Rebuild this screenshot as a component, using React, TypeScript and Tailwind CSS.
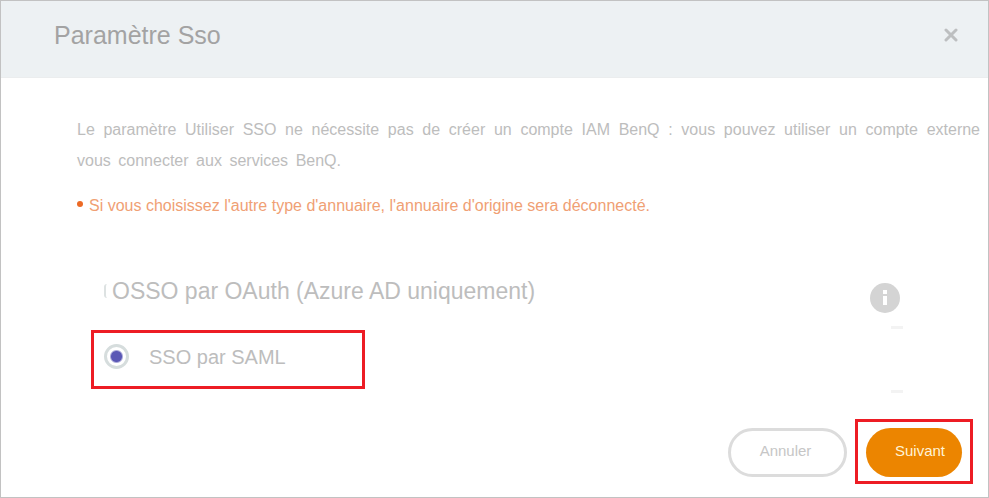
import { useState } from "react";

function CloseIcon() {
  return (
    <svg width="16" height="16" viewBox="0 0 16 16" fill="none" stroke="#bdbfc0" strokeWidth="3" strokeLinecap="round" aria-hidden="true">
      <path d="M3 2l10 10M13 2L3 12" />
    </svg>
  );
}

function InfoIcon() {
  return (
    <svg width="30" height="30" viewBox="0 0 30 30" aria-hidden="true">
      <circle cx="15" cy="15" r="15" fill="#d4d4d4" />
      <rect x="13" y="7" width="4" height="4" fill="#fff" />
      <rect x="13" y="13" width="4" height="9" fill="#fff" />
    </svg>
  );
}

export default function App() {
  const [mode, setMode] = useState("saml");
  return (
    <main
      className="flex min-h-screen flex-col border border-[#c2c2c2] bg-white text-[#bdbdbd]"
      style={{ fontFamily: '"Liberation Sans", Arial, sans-serif' }}
    >
      <header className="flex h-[77px] items-center justify-between border-b border-[#ebedee] bg-[#edf1f3] pr-[29px] pb-[7px] pl-[53px]">
        <h1 className="text-[25px] text-[#a3a3a3]">Paramètre Sso</h1>
        <button type="button" aria-label="Fermer">
          <CloseIcon />
        </button>
      </header>

      <section className="pt-[36px] pr-[8px] pl-[76px] text-base leading-[31px]">
        <p className="text-justify [text-align-last:justify]">
          Le paramètre Utiliser SSO ne nécessite pas de créer un compte IAM BenQ : vous pouvez utiliser un compte externe
        </p>
        <p className="w-[264px] whitespace-nowrap [text-align-last:justify]">vous connecter aux services BenQ.</p>
        <p className="mt-[14px] flex items-center gap-[6px] text-[#f0a074]">
          <span className="-mt-1 size-[6px] rounded-full bg-[#ec6a25]" />
          Si vous choisissez l'autre type d'annuaire, l'annuaire d'origine sera déconnecté.
        </p>
      </section>

      <fieldset className="mt-[54px] flex justify-between pr-[85px] pl-[90px]">
        <div>
          <label className="ml-[13px] flex h-[32px] items-center gap-[5px] text-[23px]">
            <input
              type="radio"
              name="mode"
              checked={mode === "oauth"}
              onChange={() => setMode("oauth")}
              className="h-[14px] w-[3px] appearance-none rounded-l-full border-l-2 border-[#dde2e2]"
            />
            OSSO par OAuth (Azure AD uniquement)
          </label>
          <div className="mt-[23px] flex h-[59px] w-[274px] items-center border-3 border-[#ed1c24] pb-[6px] pl-[10px]">
            <label className="flex items-center gap-[20px] text-xl">
              <input
                type="radio"
                name="mode"
                checked={mode === "saml"}
                onChange={() => setMode("saml")}
                className="size-[25px] appearance-none rounded-full border-3 border-[#d6dddd] checked:bg-[radial-gradient(circle,#5a57b5_5px,#fff_7px)]"
              />
              SSO par SAML
            </label>
          </div>
        </div>
        <div className="flex flex-col items-end pt-[8px]">
          <button type="button" aria-label="Informations" className="mr-[3px]">
            <InfoIcon />
          </button>
          <span className="mt-[13px] h-[3px] w-[12px] bg-[#f3f3f3]" />
          <span className="mt-[61px] h-[3px] w-[12px] bg-[#f3f3f3]" />
        </div>
      </fieldset>

      <footer className="mt-[26px] flex items-baseline justify-end gap-[8px] pr-[15px] text-[15px]">
        <button type="button" className="h-[49px] w-[119px] rounded-full border-3 border-[#dcdcdc] pr-[4px] pb-[2px] text-[#c6c6c6]">
          Annuler
        </button>
        <div className="border-3 border-[#ed1c24] px-[8px] pt-[6px] pb-[4px]">
          <button type="button" className="h-[49px] w-[96px] rounded-full bg-[#ec8500] pb-[2px] pl-[12px] text-[#fff3d6]">
            Suivant
          </button>
        </div>
      </footer>
    </main>
  );
}
